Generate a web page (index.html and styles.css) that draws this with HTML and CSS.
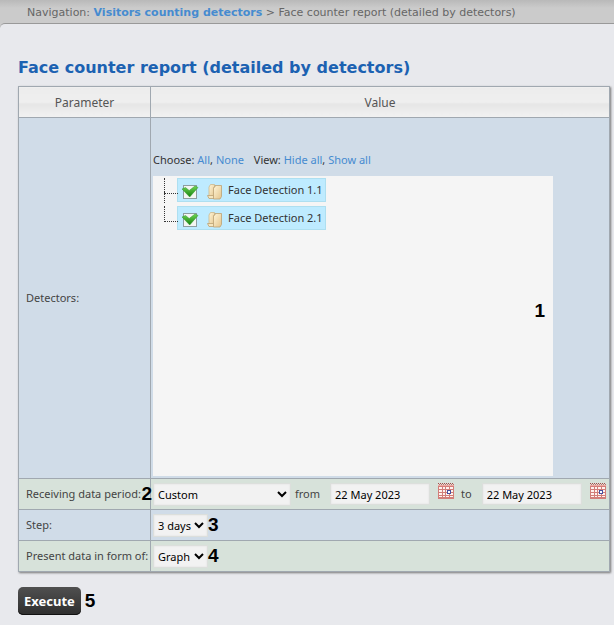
FILE: index.html
```html
<!DOCTYPE html>
<html lang="en">
<head>
<meta charset="utf-8">
<title>Face counter report (detailed by detectors)</title>
<link rel="stylesheet" href="styles.css">
</head>
<body>
<svg class="defs" aria-hidden="true">
  <defs>
    <linearGradient id="tick" x1="0" y1="0" x2="0" y2="1"><stop offset="0" stop-color="#6fd653"/><stop offset="1" stop-color="#14800f"/></linearGradient>
    <linearGradient id="paper" x1="0" y1="0" x2="1" y2="1"><stop offset="0" stop-color="#fff6d8"/><stop offset="1" stop-color="#e3c48c"/></linearGradient>
    <symbol id="check" viewBox="0 0 18 16">
      <rect x="2.5" y="2.500" width="13" height="13" fill="#f4f6f2" stroke="#8e9da0"/>
      <path d="M1 6 4.500 4.500 8.200 7.500 14 3 17 4.500 8.700 14Z" fill="url(#tick)" stroke="#2c982a" stroke-width=".5"/>
    </symbol>
    <symbol id="folder" viewBox="0 0 16 17">
      <path d="M3.500 1.500h4v13H2V4z" fill="url(#paper)" stroke="#cdb98c" stroke-width=".8"/>
      <path d="M.5 12.500h6l1 3H2z" fill="#f5e6bf" stroke="#bda273" stroke-width=".8"/>
      <path d="M6.500 4.500 8 4V2.500h6.500v11l-1.500 2.500H6.500z" fill="url(#paper)" stroke="#bda273" stroke-width=".8"/>
    </symbol>
    <symbol id="calendar" viewBox="0 0 16 16">
      <rect y="2" width="16" height="14" fill="#d27e79"/>
      <path d="M0 .5h16" stroke="#a24b48" stroke-dasharray="1 1"/>
      <path d="M0 1.500h16" stroke="#c4716c" stroke-dasharray="1 1" stroke-dashoffset="1"/>
      <path d="M0 2.500h16" stroke="#efaaa4"/>
      <path d="M1 4h3v2H1zM5 4h2v2H5zM8 4h3v2H8zM12 4h3v2h-3zM1 7h3v2H1zM5 7h2v2H5zM8 7h3v2H8zM12 7h3v2h-3zM1 10h3v2H1zM5 10h2v2H5zM8 10h3v2H8zM12 10h3v2h-3zM1 13h3v1H1zM5 13h2v1H5zM8 13h3v1H8zM12 13h3v1h-3z" fill="#fff2ee"/>
      <rect x="9.500" y="7.500" width="3" height="3" fill="#fff" stroke="#48509f"/>
    </symbol>
  </defs>
</svg>
<nav class="crumbs">Navigation: <a href="#">Visitors counting detectors</a> &gt; Face counter report (detailed by detectors)</nav>
<main class="page">
  <h1>Face counter report (detailed by detectors)</h1>
  <form>
    <table class="params">
      <thead>
        <tr><th class="name" scope="col">Parameter</th><th scope="col">Value</th></tr>
      </thead>
      <tbody>
        <tr class="detectors">
          <td>Detectors:</td>
          <td>
            <div class="choose">Choose: <a href="#">All</a>, <a href="#">None</a> <span class="view">View: <a href="#">Hide all</a>, <a href="#">Show all</a></span></div>
            <div class="tree">
              <ul>
                <li><label class="node"><span class="box"><input type="checkbox" checked><svg><use href="#check"/></svg></span><svg class="folder"><use href="#folder"/></svg>Face Detection 1.1</label></li>
                <li><label class="node"><span class="box"><input type="checkbox" checked><svg><use href="#check"/></svg></span><svg class="folder"><use href="#folder"/></svg>Face Detection 2.1</label></li>
              </ul>
              <b class="mark mark-tree">1</b>
            </div>
          </td>
        </tr>
        <tr>
          <td class="period-name"><label for="period">Receiving data period:</label><b class="mark mark-edge">2</b></td>
          <td>
            <div class="row">
              <select id="period" class="wide"><option>Custom</option></select>
              <label for="from" class="word">from</label>
              <input id="from" type="text" value="22 May 2023">
              <button type="button" class="cal" aria-label="Pick start date"><svg><use href="#calendar"/></svg></button>
              <label for="to" class="word">to</label>
              <input id="to" type="text" value="22 May 2023">
              <button type="button" class="cal" aria-label="Pick end date"><svg><use href="#calendar"/></svg></button>
            </div>
          </td>
        </tr>
        <tr>
          <td><label for="step">Step:</label></td>
          <td><div class="row"><select id="step"><option>3 days</option></select><b class="mark">3</b></div></td>
        </tr>
        <tr>
          <td><label for="view">Present data in form of:</label></td>
          <td><div class="row"><select id="view"><option>Graph</option></select><b class="mark">4</b></div></td>
        </tr>
      </tbody>
    </table>
    <div class="actions"><button type="button" class="execute">Execute</button><b class="mark">5</b></div>
  </form>
</main>
</body>
</html>
```
FILE: styles.css
```css
* { box-sizing: border-box; }
body {
  margin: 0;
  background: #cbcbcb;
  color: #444;
  font: 11px/16px "Noto Sans", "Open Sans", sans-serif;
}
.defs { position: absolute; width: 0; height: 0; }
a { color: #468bd0; text-decoration: none; }
.crumbs {
  height: 23px;
  padding: 5px 27px 0;
  background: linear-gradient(#b9b9b9, #cbcbcb 8px);
  color: #666;
  font: 11px/16px "DejaVu Sans", sans-serif;
  white-space: nowrap;
}
.crumbs a { font-weight: bold; }
.page {
  min-height: calc(100vh - 23px);
  padding: 34px 4px 0 18px;
  border-top: 1px solid #999;
  border-top-left-radius: 5px;
  background: #e8e9ed;
}
h1 {
  margin: 0 0 8px;
  color: #1c62b2;
  font: bold 16px/20px "DejaVu Sans", sans-serif;
  white-space: nowrap;
}
.params {
  width: 100%;
  table-layout: fixed;
  border-collapse: collapse;
  border: 1px solid #9a9fa5;
  box-shadow: 1px 1px 2px #777;
}
.params th, .params td { border: 1px solid #a0a8b0; }
.params th {
  height: 31px;
  padding: 1px 0 0;
  background: linear-gradient(#ececec, #efefef 50%, #e6e6e6 55%, #f2f2f2);
  color: #555;
  font-size: 12px;
  font-weight: normal;
}
.params .name { width: 132px; }
.params td { height: 31px; padding: 0 2px; background: #d7e2da; white-space: nowrap; }
.params td:first-child { padding-left: 7px; }
.params tr:nth-child(odd) td { background: #d0dce8; }
.params .detectors td { height: 361px; vertical-align: middle; }
.params .detectors td:last-child { padding-bottom: 2px; vertical-align: bottom; }
.choose { margin-bottom: 8px; color: #333; }
.view { margin-left: 7px; }
.tree {
  position: relative;
  width: 400px;
  max-width: 100%;
  height: 300px;
  background: #f5f5f5;
}
.tree ul { display: grid; gap: 4px; margin: 0; padding: 2px 0 0 11px; list-style: none; }
.tree li { position: relative; display: flex; padding-left: 13px; }
.tree li::before {
  content: "";
  position: absolute;
  left: 0;
  top: 0;
  width: 13px;
  height: 15px;
  border-left: 1px dotted #333;
  border-bottom: 1px dotted #333;
}
.tree li:not(:last-child)::after {
  content: "";
  position: absolute;
  left: 0;
  top: 14px;
  height: 11px;
  border-left: 1px dotted #333;
}
.node {
  display: flex;
  align-items: center;
  height: 24px;
  padding: 0 2px 0 3px;
  border: 1px solid #aedff0;
  background: #beebff;
  color: #333;
}
.box { display: grid; width: 18px; height: 16px; margin-top: 2px; }
.box input { appearance: none; margin: 0; }
.box input, .box svg { grid-area: 1 / 1; width: 18px; height: 16px; }
.box svg { pointer-events: none; }
.folder { width: 16px; height: 17px; margin: 2px 5px 0 8px; }
.mark { color: #000; font: bold 19px/22px "Liberation Sans", sans-serif; }
.mark-tree { position: absolute; right: 8px; top: 124px; }
.period-name { position: relative; }
.mark-edge { position: absolute; right: -2px; top: 4px; }
.row { display: flex; align-items: center; }
select, input[type="text"] {
  flex: none;
  height: 23px;
  margin: 0;
  border: 1px solid #dcdfdc;
  border-radius: 0;
  background: #f2f2f2;
  box-shadow: inset 0 0 2px #ddd;
  color: #000;
  font: 11px/16px "Noto Sans", "Open Sans", sans-serif;
}
select { padding: 0; }
.wide { width: 138px; }
input[type="text"] { width: 100px; height: 22px; padding: 0 4px; }
.word { margin: 0 10px 0 4px; }
.cal { flex: none; width: 16px; height: 16px; margin: 0 3px 6px 8px; padding: 0; border: 0; background: none; }
.cal:last-child { margin-right: 0; }
.cal svg { display: block; width: 16px; height: 16px; }
.actions { display: flex; align-items: center; gap: 4px; margin-top: 15px; }
.execute {
  height: 28px;
  padding: 0 6px;
  border: 0;
  border-radius: 5px;
  box-shadow: inset 0 -1px 0 #111;
  background: linear-gradient(#505050, #2e2e2e);
  color: #fff;
  font: bold 13px/20px "Noto Sans", "Open Sans", sans-serif;
}
```
